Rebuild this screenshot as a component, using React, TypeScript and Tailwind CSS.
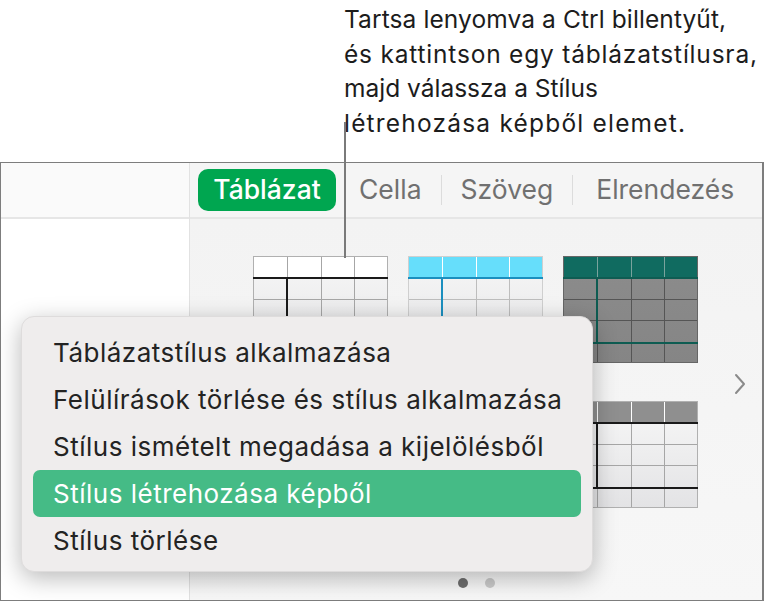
import React from "react";

type Variant = "plain" | "cyan" | "teal" | "gray";

function Thumb({ variant }: { variant: Variant }) {
  const W = 135;
  const H = 107;
  const xs = [0, 34, 68, 101, 135];
  const ys = [0, 21, 43, 64, 86, 107];
  const cfg = {
    plain: { header: "#ffffff", body: ["#f7f7f7", "#e3e3e5"], grid: "#a6a6a6", hsep: "#a6a6a6", accent: "#1a1a1a", lastRow: false, border: "#b0b0b0" },
    cyan: { header: "#66defb", body: ["#f7f7f7", "#e3e3e5"], grid: "#bdbdbd", hsep: "#ffffff", accent: "#1b8fbf", lastRow: false, border: "#cfcfcf" },
    teal: { header: "#106b60", body: ["#8c8c8c", "#858585"], grid: "#555555", hsep: "#7aa39d", accent: "#0e5c52", lastRow: true, border: "#666666" },
    gray: { header: "#8f8f8f", body: ["#f7f7f7", "#e3e3e5"], grid: "#a6a6a6", hsep: "#ffffff", accent: "#1a1a1a", lastRow: true, border: "#b0b0b0" },
  }[variant];
  const gid = `g-${variant}`;
  return (
    <svg width={W} height={H} viewBox={`0 0 ${W} ${H}`} className="block">
      <defs>
        <linearGradient id={gid} x1="0" y1="0" x2="0" y2="1">
          <stop offset="0" stopColor={cfg.body[0]} />
          <stop offset="1" stopColor={cfg.body[1]} />
        </linearGradient>
      </defs>
      <rect x="0" y="0" width={W} height={H} fill={`url(#${gid})`} />
      <rect x="0" y="0" width={W} height="21" fill={cfg.header} />
      {ys.slice(1, -1).map((y) => (
        <line key={`h${y}`} x1="0" x2={W} y1={y + 0.5} y2={y + 0.5} stroke={cfg.grid} strokeWidth="1" />
      ))}
      {xs.slice(1, -1).map((x) => (
        <line key={`v${x}`} x1={x + 0.5} x2={x + 0.5} y1="21" y2={H} stroke={cfg.grid} strokeWidth="1" />
      ))}
      {xs.slice(1, -1).map((x) => (
        <line key={`hs${x}`} x1={x + 0.5} x2={x + 0.5} y1="0" y2="21" stroke={cfg.hsep} strokeWidth="1" />
      ))}
      <rect x="0.5" y="0.5" width={W - 1} height={H - 1} fill="none" stroke={cfg.border} strokeWidth="1" />
      <line x1="0" x2={W} y1="22" y2="22" stroke={cfg.accent} strokeWidth="2" />
      <line x1="34" x2="34" y1="22" y2={cfg.lastRow ? 87 : H} stroke={cfg.accent} strokeWidth="2" />
      {cfg.lastRow && <line x1="0" x2={W} y1="87" y2="87" stroke={cfg.accent} strokeWidth="2" />}
    </svg>
  );
}

const font = { fontFamily: 'Inter, "Liberation Sans", sans-serif' };

export default function App() {
  const items = [
    "Táblázatstílus alkalmazása",
    "Felülírások törlése és stílus alkalmazása",
    "Stílus ismételt megadása a kijelölésből",
    "Stílus létrehozása képből",
    "Stílus törlése",
  ];
  return (
    <div className="relative w-[782px] h-[601px] bg-white overflow-hidden" style={font}>
      {/* Callout */}
      <div className="h-[162px] pl-[344px] pt-[2px]">
        <div className="text-[24.5px] leading-[34.5px] text-[#1c1c1c]">
          <p className="tracking-[0.1px]">Tartsa lenyomva a Ctrl billentyűt,</p>
          <p className="tracking-[0.8px]">és kattintson egy táblázatstílusra,</p>
          <p>majd válassza a Stílus</p>
          <p className="tracking-[1.2px]">létrehozása képből elemet.</p>
        </div>
      </div>

      {/* Panel */}
      <div className="flex w-[764px] h-[439px] border border-[#7d7d7d] border-r-[2px]">
        <div className="w-[189px] flex flex-col border-r border-[#e2e2e2] bg-white">
          <div className="h-[56px] bg-[#fafafa] border-b-[2px] border-[#e6e6e6]" />
          <div className="flex-1 bg-white" />
        </div>
        <div className="flex-1 flex flex-col bg-[#f5f5f5]">
          <div className="h-[56px] border-b-[2px] border-[#e6e6e6] flex items-center pl-[8px] text-[26.5px] text-[#707070]">
            <div className="h-[42px] w-[138px] rounded-[10px] bg-[#00a650] text-white flex items-center justify-center font-medium">
              Táblázat
            </div>
            <span className="ml-[23px]">Cella</span>
            <span className="ml-[19px] w-px h-[30px] bg-[#dcdcdc]" />
            <span className="ml-[19px]">Szöveg</span>
            <span className="ml-[19px] w-px h-[30px] bg-[#dcdcdc]" />
            <span className="ml-[23px]">Elrendezés</span>
          </div>
          <div className="relative flex-1 bg-gradient-to-b from-[#f3f3f3] to-[#f7f7f7]">
            <div className="grid grid-cols-[135px_135px_135px] gap-x-[20px] gap-y-[38px] pl-[63px] pt-[37px]">
              <Thumb variant="plain" />
              <Thumb variant="cyan" />
              <Thumb variant="teal" />
              <Thumb variant="plain" />
              <Thumb variant="cyan" />
              <Thumb variant="gray" />
            </div>
            <svg className="absolute left-[543px] top-[153px]" width="14" height="24" viewBox="0 0 14 24">
              <path d="M3 3 L11 12 L3 21" fill="none" stroke="#8a8a8a" strokeWidth="2" strokeLinecap="round" strokeLinejoin="round" />
            </svg>
            <div className="absolute left-[268px] top-[359px] flex gap-[17px] items-center">
              <span className="w-[10px] h-[10px] rounded-full bg-[#6e6e6e]" />
              <span className="w-[10px] h-[10px] rounded-full bg-[#cacaca]" />
            </div>
          </div>
        </div>
      </div>

      {/* Callout leader line */}
      <div className="absolute left-[344px] top-[122px] w-[2px] h-[136px] bg-[#7a7a7a]" />

      {/* Context menu */}
      <div className="absolute left-[21px] top-[316px] w-[572px] h-[256px] rounded-[13px] bg-[#efeded] shadow-[0_6px_24px_rgba(0,0,0,0.28)] border border-[#dedcdc] px-[11px] pt-[12px]">
        {items.map((t, i) => (
          <div
            key={t}
            className={
              "h-[47px] rounded-[7px] flex items-center pl-[20px] text-[26px] tracking-[0.5px] " +
              (i === 3 ? "bg-[#45bb86] text-white" : "text-[#232323]")
            }
          >
            {t}
          </div>
        ))}
      </div>
    </div>
  );
}
